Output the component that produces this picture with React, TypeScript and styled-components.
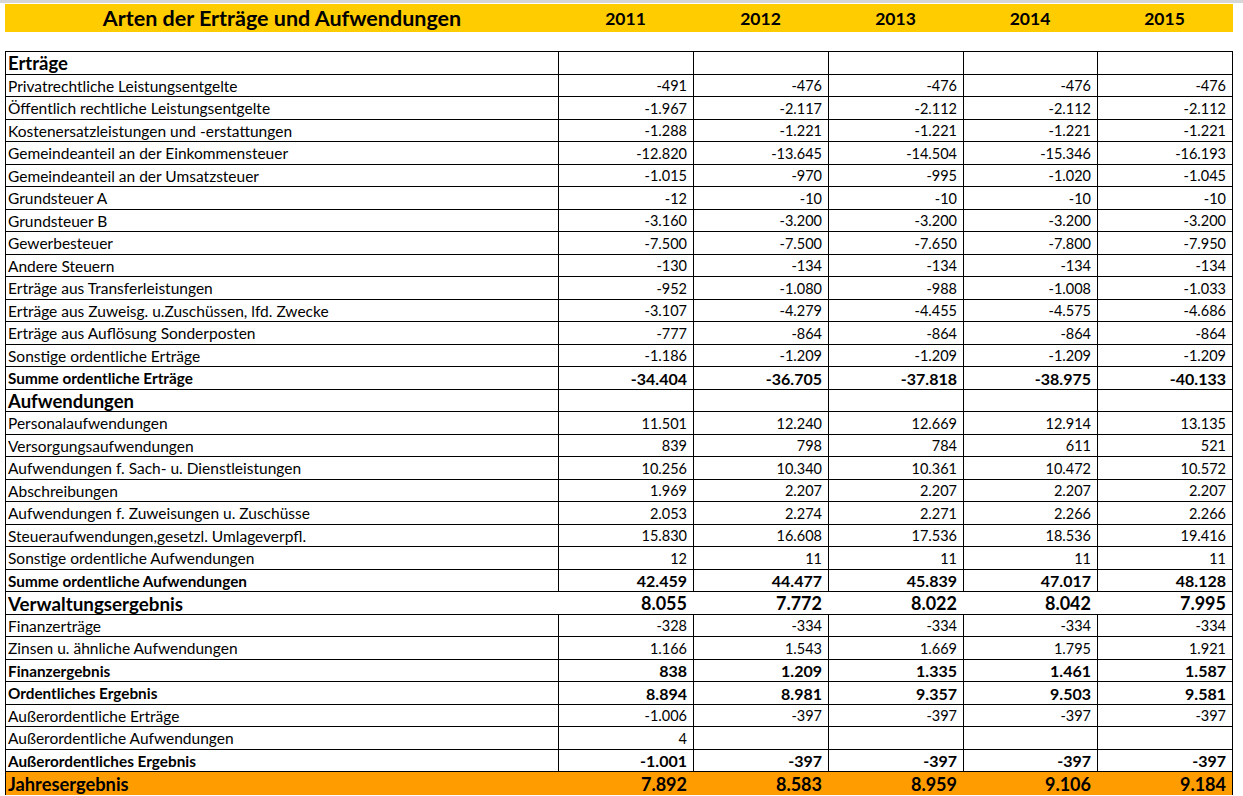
import React from "react";
import styled, { createGlobalStyle, css } from "styled-components";

const GlobalStyle = createGlobalStyle`
  html, body { margin: 0; padding: 0; background: #ffffff; }
  body { font-family: "Lato", "Liberation Sans", sans-serif; color: #000; }
`;

const COLS = "552px 135px 135px 135px 134px 135px";

const Page = styled.div`
  width: 1243px;
  height: 796px;
  overflow: hidden;
  border-top: 3px solid #d6d6d6;
  box-sizing: border-box;
  padding: 1px 0 0 5px;
`;

const TitleBar = styled.div`
  display: grid;
  grid-template-columns: 1px ${COLS} 1px;
  width: 1228px;
  height: 28px;
  background: #ffcc00;
  align-items: center;
  font-weight: 700;
`;

const TitleText = styled.div`
  grid-column: 2;
  text-align: center;
  font-size: 21.5px;
`;

const YearHead = styled.div`
  text-align: center;
  font-size: 17.5px;
`;

const Table = styled.div`
  margin-top: 19px;
  width: 1228px;
  border: 1px solid #000;
  border-bottom: none;
  box-sizing: border-box;
`;

type Variant = "normal" | "bold" | "section" | "big" | "total";

const Row = styled.div<{ $odd: boolean; $variant: Variant }>`
  display: grid;
  grid-template-columns: ${COLS};
  height: ${(p) => (p.$odd ? 22 : 23)}px;
  box-sizing: border-box;
  border-bottom: 1px solid #000;
  ${(p) =>
    p.$variant === "total" &&
    css`
      background: #ff9c00;
      border-bottom: none;
    `}
`;

const labelSizes: Record<Variant, string> = {
  normal: "15.5px",
  bold: "15.3px",
  section: "18.5px",
  big: "18.8px",
  total: "18.3px",
};

const valueSizes: Record<Variant, string> = {
  normal: "14.5px",
  bold: "16px",
  section: "14.5px",
  big: "18px",
  total: "18px",
};

const Label = styled.div<{ $variant: Variant }>`
  padding-left: 2px;
  display: flex;
  align-items: center;
  white-space: nowrap;
  overflow: hidden;
  font-size: ${(p) => labelSizes[p.$variant]};
  font-weight: ${(p) => (p.$variant === "normal" ? 400 : 700)};
`;

const Value = styled.div<{ $variant: Variant }>`
  display: flex;
  align-items: center;
  justify-content: flex-end;
  padding-right: 6px;
  font-size: ${(p) => valueSizes[p.$variant]};
  font-weight: ${(p) => (p.$variant === "normal" ? 400 : 700)};
  border-left: 1px solid
    ${(p) => (p.$variant === "big" || p.$variant === "total" ? "transparent" : "#000")};
`;

type Line = { label: string; values: string[]; variant?: Variant };

const lines: Line[] = [
  { label: "Erträge", values: ["", "", "", "", ""], variant: "section" },
  { label: "Privatrechtliche Leistungsentgelte", values: ["-491", "-476", "-476", "-476", "-476"] },
  { label: "Öffentlich rechtliche Leistungsentgelte", values: ["-1.967", "-2.117", "-2.112", "-2.112", "-2.112"] },
  { label: "Kostenersatzleistungen und -erstattungen", values: ["-1.288", "-1.221", "-1.221", "-1.221", "-1.221"] },
  { label: "Gemeindeanteil an der Einkommensteuer", values: ["-12.820", "-13.645", "-14.504", "-15.346", "-16.193"] },
  { label: "Gemeindeanteil an der Umsatzsteuer", values: ["-1.015", "-970", "-995", "-1.020", "-1.045"] },
  { label: "Grundsteuer A", values: ["-12", "-10", "-10", "-10", "-10"] },
  { label: "Grundsteuer B", values: ["-3.160", "-3.200", "-3.200", "-3.200", "-3.200"] },
  { label: "Gewerbesteuer", values: ["-7.500", "-7.500", "-7.650", "-7.800", "-7.950"] },
  { label: "Andere Steuern", values: ["-130", "-134", "-134", "-134", "-134"] },
  { label: "Erträge aus Transferleistungen", values: ["-952", "-1.080", "-988", "-1.008", "-1.033"] },
  { label: "Erträge aus Zuweisg. u.Zuschüssen, lfd. Zwecke", values: ["-3.107", "-4.279", "-4.455", "-4.575", "-4.686"] },
  { label: "Erträge aus Auflösung Sonderposten", values: ["-777", "-864", "-864", "-864", "-864"] },
  { label: "Sonstige ordentliche Erträge", values: ["-1.186", "-1.209", "-1.209", "-1.209", "-1.209"] },
  { label: "Summe ordentliche Erträge", values: ["-34.404", "-36.705", "-37.818", "-38.975", "-40.133"], variant: "bold" },
  { label: "Aufwendungen", values: ["", "", "", "", ""], variant: "section" },
  { label: "Personalaufwendungen", values: ["11.501", "12.240", "12.669", "12.914", "13.135"] },
  { label: "Versorgungsaufwendungen", values: ["839", "798", "784", "611", "521"] },
  { label: "Aufwendungen f. Sach- u. Dienstleistungen", values: ["10.256", "10.340", "10.361", "10.472", "10.572"] },
  { label: "Abschreibungen", values: ["1.969", "2.207", "2.207", "2.207", "2.207"] },
  { label: "Aufwendungen f. Zuweisungen u. Zuschüsse", values: ["2.053", "2.274", "2.271", "2.266", "2.266"] },
  { label: "Steueraufwendungen,gesetzl. Umlageverpfl.", values: ["15.830", "16.608", "17.536", "18.536", "19.416"] },
  { label: "Sonstige ordentliche Aufwendungen", values: ["12", "11", "11", "11", "11"] },
  { label: "Summe ordentliche Aufwendungen", values: ["42.459", "44.477", "45.839", "47.017", "48.128"], variant: "bold" },
  { label: "Verwaltungsergebnis", values: ["8.055", "7.772", "8.022", "8.042", "7.995"], variant: "big" },
  { label: "Finanzerträge", values: ["-328", "-334", "-334", "-334", "-334"] },
  { label: "Zinsen u. ähnliche Aufwendungen", values: ["1.166", "1.543", "1.669", "1.795", "1.921"] },
  { label: "Finanzergebnis", values: ["838", "1.209", "1.335", "1.461", "1.587"], variant: "bold" },
  { label: "Ordentliches Ergebnis", values: ["8.894", "8.981", "9.357", "9.503", "9.581"], variant: "bold" },
  { label: "Außerordentliche Erträge", values: ["-1.006", "-397", "-397", "-397", "-397"] },
  { label: "Außerordentliche Aufwendungen", values: ["4", "", "", "", ""] },
  { label: "Außerordentliches Ergebnis", values: ["-1.001", "-397", "-397", "-397", "-397"], variant: "bold" },
  { label: "Jahresergebnis", values: ["7.892", "8.583", "8.959", "9.106", "9.184"], variant: "total" },
];

const years = ["2011", "2012", "2013", "2014", "2015"];

export default function App() {
  return (
    <>
      <GlobalStyle />
      <Page>
        <TitleBar>
          <TitleText>Arten der Erträge und Aufwendungen</TitleText>
          {years.map((y) => (
            <YearHead key={y}>{y}</YearHead>
          ))}
        </TitleBar>
        <Table>
          {lines.map((l, i) => {
            const v = l.variant ?? "normal";
            return (
              <Row key={l.label} $odd={i % 2 === 1} $variant={v}>
                <Label $variant={v}>{l.label}</Label>
                {l.values.map((val, j) => (
                  <Value key={j} $variant={v}>
                    {val}
                  </Value>
                ))}
              </Row>
            );
          })}
        </Table>
      </Page>
    </>
  );
}
